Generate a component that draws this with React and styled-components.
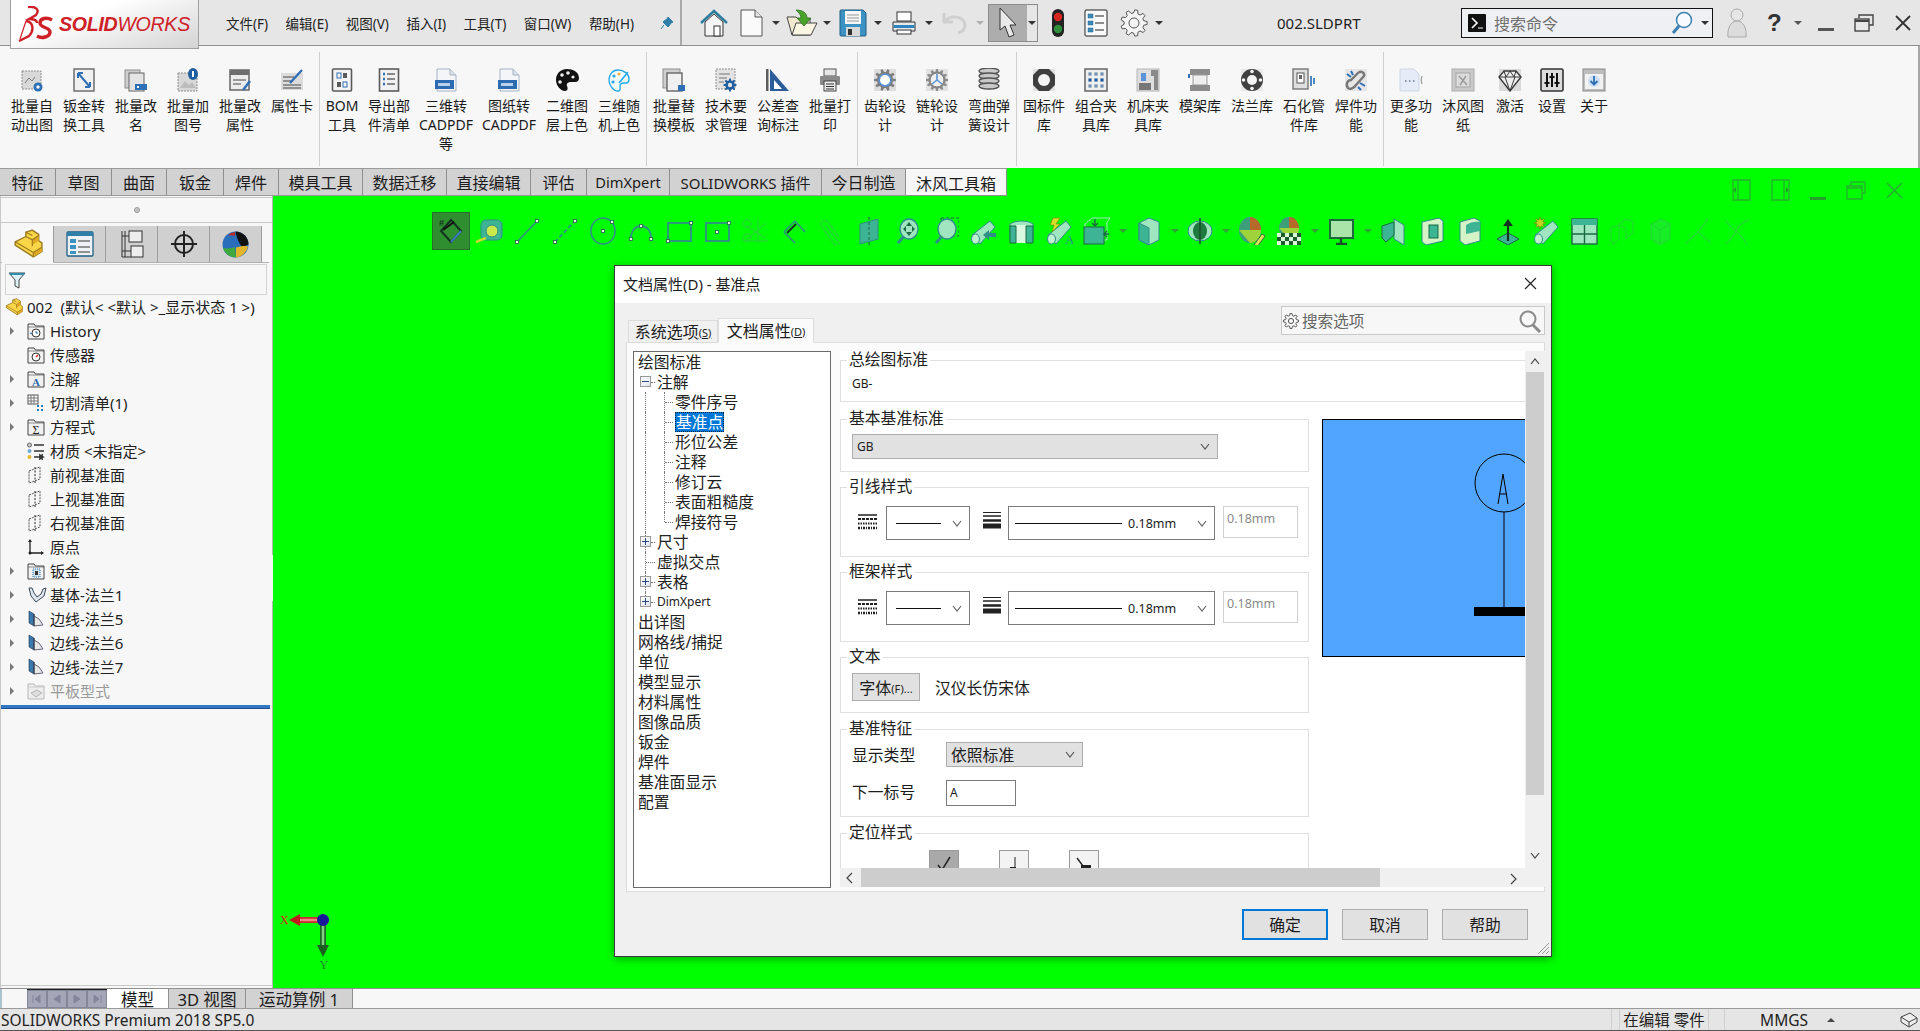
import React from "react";
import styled, { createGlobalStyle } from "styled-components";

const GlobalStyle = createGlobalStyle`
  html, body { margin: 0; padding: 0; height: 100%; overflow: hidden; background: #00ff00; }
  body { font-family: "Noto Sans", "Noto Sans CJK SC", sans-serif; color: #1c1c1c; }
  #root { height: 100%; }
  * { box-sizing: border-box; }
`;

const Svg = styled.svg`
  display: block;
  flex: none;
`;
const Ico = ({ w = 24, h, v = "0 0 24 24", children }) => (
  <Svg width={w} height={h || w} viewBox={v}>
    {children}
  </Svg>
);

const gearPath = (cx, cy, r1, r2, n) => {
  const pts = [];
  const step = (Math.PI * 2) / n;
  for (let i = 0; i < n; i++) {
    const a = i * step;
    [[-0.32, r1], [-0.16, r2], [0.16, r2], [0.32, r1]].forEach(([o, r]) => {
      const t = a + o * step;
      pts.push(`${(cx + r * Math.cos(t)).toFixed(2)} ${(cy + r * Math.sin(t)).toFixed(2)}`);
    });
  }
  return `M${pts.join("L")}Z`;
};

/* ---------- ribbon icons ---------- */
const G = "#8d8d8d";
const B = "#2f6fb5";
const ribbonIcons = {
  autoDraw: (
    <>
      <rect x="2" y="3" width="19" height="18" fill="#d9d9d9" stroke={G} strokeDasharray="2 1" />
      <path d="M5 15l4-5 3 3 3-4" fill="none" stroke="#777" />
      <circle cx="18" cy="19" r="4.5" fill={B} />
      <circle cx="18" cy="19" r="1.7" fill="#fff" />
    </>
  ),
  sheetConvert: (
    <>
      <rect x="2" y="1" width="20" height="22" fill="#f1f1f1" stroke="#666" strokeWidth="1.4" />
      <path d="M6 5l12 14M6 5v5M6 5h5M18 19v-5M18 19h-5" fill="none" stroke={B} strokeWidth="2" />
    </>
  ),
  rename: (
    <>
      <rect x="1" y="2" width="15" height="18" fill="#cfcfcf" stroke={G} />
      <rect x="5" y="5" width="15" height="18" fill="#e4e4e4" stroke="#666" />
      <rect x="11" y="16" width="12" height="6" fill={B} />
      <rect x="13" y="18" width="2" height="2" fill="#fff" />
    </>
  ),
  addNo: (
    <>
      <rect x="2" y="5" width="19" height="18" fill="#d8d8d8" stroke={G} strokeDasharray="2 1" />
      <path d="M4 20l5-7 4 4 3-3 4 6z" fill="#bcbcbc" />
      <ellipse cx="17" cy="6" rx="5" ry="6" fill="#1f5e9f" />
      <rect x="16" y="3" width="2" height="6" fill="#fff" />
    </>
  ),
  props: (
    <>
      <rect x="2" y="2" width="19" height="20" fill="#ececec" stroke="#666" strokeWidth="1.5" />
      <rect x="2" y="2" width="19" height="5" fill="#6d6d6d" />
      <path d="M5 12h13M5 16h8" stroke="#999" strokeWidth="2" />
      <path d="M15 22l7-9" stroke={B} strokeWidth="2.4" />
    </>
  ),
  card: (
    <>
      <rect x="1" y="5" width="22" height="17" fill="#dcdcdc" />
      <path d="M3 9h11M3 13h9M3 17h18M3 20h18" stroke="#7a7a7a" strokeWidth="1.7" />
      <path d="M10 15L22 2" stroke={B} strokeWidth="2.4" />
    </>
  ),
  bom: (
    <>
      <rect x="2.5" y="1" width="19" height="22" rx="1" fill="#f4f4f4" stroke="#5a5a5a" strokeWidth="1.6" />
      <rect x="7" y="5" width="4" height="5" fill="none" stroke={B} />
      <rect x="13" y="5" width="4" height="5" fill="#5a5a5a" />
      <rect x="7" y="14" width="4" height="5" fill="#5a5a5a" />
      <rect x="13" y="14" width="4" height="5" fill="none" stroke={B} />
    </>
  ),
  list: (
    <>
      <rect x="2.5" y="1" width="19" height="22" fill="#f1f1f1" stroke="#5a5a5a" strokeWidth="1.6" />
      <path d="M6 6h2M6 11h2M6 16h2" stroke={B} strokeWidth="2.4" />
      <path d="M10 6h8M10 11h8M10 16h8" stroke="#666" strokeWidth="1.6" />
    </>
  ),
  pdf: (
    <>
      <path d="M3 1h13l6 6v16H3z" fill="#f3f5f9" stroke="#a8b3c2" />
      <path d="M16 1v6h6" fill="#dbe2ec" stroke="#a8b3c2" />
      <rect x="1" y="12" width="19" height="9" fill="#2d6cb0" />
      <rect x="4" y="15" width="12" height="3" fill="#b8d0ec" />
    </>
  ),
  paletteBlack: (
    <>
      <path d="M12 1C5 1 1 6 1 12s5 11 9 11c3 0 3-3 2-5s1-4 4-4h4c3 0 4-2 4-4 0-6-6-9-12-9z" fill="#111" />
      <circle cx="7" cy="7" r="1.8" fill="#eee" />
      <circle cx="13" cy="5" r="1.8" fill="#eee" />
      <circle cx="18" cy="9" r="1.6" fill="#eee" />
      <circle cx="5" cy="14" r="1.8" fill="#eee" />
    </>
  ),
  paletteBlue: (
    <>
      <path d="M11 2C5 2 2 7 2 12s4 11 9 11c3 0 2-3 2-5s2-3 4-3h2c2 0 3-2 3-4 0-5-5-9-11-9z" fill="#f2fbff" stroke="#27a9e8" strokeWidth="1.4" />
      <circle cx="7" cy="8" r="1.6" fill="#27a9e8" />
      <circle cx="12" cy="6" r="1.6" fill="#f2b53c" />
      <circle cx="6" cy="14" r="1.6" fill="#27a9e8" />
      <path d="M12 15l9-11" stroke="#27a9e8" strokeWidth="1.6" />
    </>
  ),
  replace: (
    <>
      <rect x="1" y="1" width="17" height="19" fill="#cfcfcf" stroke={G} />
      <rect x="5" y="5" width="15" height="18" fill="#f0f0f0" stroke="#666" strokeWidth="1.4" />
      <rect x="16" y="17" width="7" height="6" fill={B} />
    </>
  ),
  techReq: (
    <>
      <rect x="2" y="1" width="19" height="20" fill="#e3e3e3" stroke={G} strokeDasharray="2 1" />
      <path d="M5 6h11M5 10h8M5 14h5" stroke="#9a9a9a" strokeWidth="1.4" />
      <path d={gearPath(16, 17, 4.6, 6.6, 8)} fill="#1f5e9f" />
      <circle cx="16" cy="17" r="2.2" fill="#e3e3e3" />
    </>
  ),
  tolerance: (
    <>
      <path d="M4 1l19 22H4z" fill="#2c5d99" />
      <path d="M8 12l8 9H8z" fill="#fff" />
      <path d="M1 1v22" stroke="#5d5d5d" strokeWidth="3" />
    </>
  ),
  printer: (
    <>
      <rect x="6" y="1" width="12" height="7" fill="#e6e6e6" stroke="#555" />
      <rect x="2" y="8" width="20" height="9" rx="1" fill="#8a8a8a" />
      <rect x="6" y="13" width="12" height="10" fill="#ececec" stroke="#444" />
      <path d="M8 16h8M8 18.5h8M8 21h8" stroke="#333" />
    </>
  ),
  gear: (
    <>
      <rect x="1" y="1" width="22" height="22" fill="#ddd" />
      <path d={gearPath(12, 12, 8, 11, 10)} fill="#7d7d7d" />
      <circle cx="12" cy="12" r="6.6" fill="#5a94d6" />
      <circle cx="12" cy="12" r="5" fill="#fff" />
    </>
  ),
  sprocket: (
    <>
      <rect x="1" y="1" width="22" height="22" fill="#e2e2e2" />
      <path d={gearPath(12, 12, 8.5, 11, 12)} fill="#8b8b8b" />
      <circle cx="12" cy="12" r="7" fill="#eee" />
      <path d="M12 12V6M12 12l5 4M12 12l-5 4" stroke="#5a94d6" strokeWidth="1.6" />
      <circle cx="12" cy="12" r="7" fill="none" stroke="#777" />
    </>
  ),
  spring: (
    <>
      {[3, 8, 13, 18].map((y) => (
        <ellipse key={y} cx="12" cy={y} rx="10" ry="3" fill="#c8c8c8" stroke="#505050" strokeWidth="1.3" />
      ))}
    </>
  ),
  nut: (
    <>
      <rect x="1" y="1" width="22" height="22" fill="#e1e1e1" />
      <path d="M7 1h10l6 6v10l-6 6H7l-6-6V7z" fill="#3f3f3f" />
      <circle cx="12" cy="12" r="6" fill="#f4f4f4" />
    </>
  ),
  clampGrid: (
    <>
      <rect x="1" y="1" width="22" height="22" fill="#efefef" stroke="#666" strokeWidth="1.5" />
      {[6, 12, 18].flatMap((y) =>
        [6, 12, 18].map((x) => <rect key={`${x}${y}`} x={x - 1.6} y={y - 1.6} width="3.2" height="3.2" fill={y === 12 ? "#1f5e9f" : "#6f8fb0"} />)
      )}
    </>
  ),
  machine: (
    <>
      <rect x="1" y="1" width="22" height="22" fill="#dedede" stroke="#b5b5b5" />
      <path d="M15 2h7v20h-4V8h-3z" fill="#8a8a8a" />
      <rect x="5" y="5" width="5" height="8" fill="#5a94d6" />
      <rect x="3" y="15" width="12" height="7" fill="#777" />
    </>
  ),
  mold: (
    <>
      <rect x="2" y="1" width="20" height="6" fill="#8c8c8c" />
      <rect x="5" y="7" width="14" height="10" fill="#eee" stroke="#999" />
      <rect x="2" y="17" width="20" height="6" fill="#8c8c8c" />
      <path d="M1 6v4" stroke={B} strokeWidth="2" />
    </>
  ),
  flange: (
    <>
      <rect x="1" y="1" width="22" height="22" fill="#eaeaea" />
      <circle cx="12" cy="12" r="11" fill="#404040" />
      <circle cx="12" cy="12" r="5" fill="#f4f4f4" />
      {[[12, 3.5], [12, 20.5], [3.5, 12], [20.5, 12]].map(([x, y]) => (
        <circle key={`${x}${y}`} cx={x} cy={y} r="1.8" fill="#f4f4f4" />
      ))}
    </>
  ),
  pipe: (
    <>
      <rect x="1" y="1" width="15" height="20" fill="#dfdfdf" stroke="#777" strokeWidth="1.4" />
      <rect x="5" y="5" width="7" height="10" fill="#fff" stroke="#555" />
      <rect x="7" y="7" width="3" height="4" fill="#666" />
      <path d="M19 8v10M22 10v6" stroke="#4b86c5" strokeWidth="2" />
    </>
  ),
  chain: (
    <>
      <rect x="1" y="1" width="22" height="22" fill="#e6e6e6" />
      <path d="M4 20c-3-4 0-8 3-8l7-7c3-3 7 0 6 3l-8 9c-2 3-6 5-8 3z" fill="none" stroke="#777" strokeWidth="2.4" />
      <path d="M3 6l4 3M7 3l2 4M16 15l5 3M14 19l3 3" stroke={B} strokeWidth="2" />
    </>
  ),
  moreDoc: (
    <>
      <path d="M1 1h14l5 5v17H1z" fill="#e6ecf7" stroke="#cdd6e4" />
      <path d="M6 13h1.5M10 13h1.5M14 13h1.5" stroke="#8794a8" strokeWidth="2" />
      <path d="M23 8c-1 3-1 5 0 8" fill="none" stroke="#888" />
    </>
  ),
  sheetPale: (
    <>
      <rect x="1" y="1" width="22" height="22" fill="#c9c9c9" stroke="#aeaeae" />
      <rect x="5" y="5" width="14" height="14" fill="#dcdcdc" stroke="#a5a5a5" />
      <path d="M8 8l8 9M15 8l-6 9" stroke="#999" strokeWidth="1.5" />
    </>
  ),
  diamond: (
    <>
      <rect x="1" y="1" width="22" height="22" fill="#dadada" />
      <path d="M6 3h12l5 6-11 14L1 9z" fill="#eee" stroke="#3a3a3a" strokeWidth="1.4" />
      <path d="M1 9h22M7 9l5 14 5-14M6 3l2 6M18 3l-2 6M12 3L8 9M12 3l4 6" fill="none" stroke="#3a3a3a" />
    </>
  ),
  sliders: (
    <>
      <rect x="1" y="1" width="22" height="22" rx="1.5" fill="#dcdcdc" stroke="#333" strokeWidth="1.6" />
      <path d="M7 5v14M12 5v14M17 5v14" stroke="#111" strokeWidth="2" />
      <path d="M4.5 15h5M9.5 9h5M14.5 15h5" stroke="#111" strokeWidth="2" />
    </>
  ),
  download: (
    <>
      <rect x="1" y="1" width="22" height="22" fill="#bdbdbd" stroke="#8a8a8a" />
      <rect x="3" y="6" width="18" height="15" fill="#f2f2f2" />
      <circle cx="12" cy="13" r="6" fill="#cfe0f3" />
      <path d="M12 8v8M8.5 13l3.5 3.5 3.5-3.5" fill="none" stroke="#2f6fb5" strokeWidth="1.8" />
    </>
  ),
};

const ribbonGroups = [
  [
    ["autoDraw", "批量自\n动出图", 52],
    ["sheetConvert", "钣金转\n换工具", 52],
    ["rename", "批量改\n名", 52],
    ["addNo", "批量加\n图号", 52],
    ["props", "批量改\n属性", 52],
    ["card", "属性卡", 52],
  ],
  [
    ["bom", "BOM\n工具", 42],
    ["list", "导出部\n件清单", 52],
    ["pdf", "三维转\nCADPDF\n等", 62],
    ["pdf", "图纸转\nCADPDF", 64],
    ["paletteBlack", "二维图\n层上色", 52],
    ["paletteBlue", "三维随\n机上色", 52],
  ],
  [
    ["replace", "批量替\n换模板", 52],
    ["techReq", "技术要\n求管理", 52],
    ["tolerance", "公差查\n询标注", 52],
    ["printer", "批量打\n印", 52],
  ],
  [
    ["gear", "齿轮设\n计", 52],
    ["sprocket", "链轮设\n计", 52],
    ["spring", "弯曲弹\n簧设计", 52],
  ],
  [
    ["nut", "国标件\n库", 52],
    ["clampGrid", "组合夹\n具库", 52],
    ["machine", "机床夹\n具库", 52],
    ["mold", "模架库", 52],
    ["flange", "法兰库", 52],
    ["pipe", "石化管\n件库", 52],
    ["chain", "焊件功\n能", 52],
  ],
  [
    ["moreDoc", "更多功\n能", 52],
    ["sheetPale", "沐风图\n纸", 52],
    ["diamond", "激活", 42],
    ["sliders", "设置", 42],
    ["download", "关于", 42],
  ],
];

/* ---------- layout ---------- */
const Page = styled.div`
  height: 100vh;
  display: flex;
  flex-direction: column;
  overflow: hidden;
`;
const TitleBar = styled.header`
  height: 46px;
  flex: none;
  display: flex;
  align-items: center;
  background: #e6e6e6;
  border-bottom: 1px solid #8f8f8f;
  position: relative;
  z-index: 3;
`;
const Logo = styled.div`
  width: 189px;
  height: 50px;
  margin: -1px 0 -4px 10px;
  align-self: flex-start;
  display: flex;
  align-items: center;
  padding-left: 7px;
  gap: 5px;
  flex: none;
  background: linear-gradient(160deg, #ffffff 35%, #d4d4d4 100%);
  border: 1px solid #a0a0a0;
  border-top: 0;
`;
const LogoText = styled.span`
  font: italic 700 19.6px/1 "Liberation Sans", sans-serif;
  color: #cf2027;
  letter-spacing: -0.3px;
  margin-top: 2px;
  b { font-weight: 400; }
`;
const Menu = styled.nav`
  display: flex;
  gap: 17.5px;
  margin-left: 27px;
  font-size: 13.5px;
  color: #222;
  width: 408px;
  white-space: nowrap;
`;
const PinWrap = styled.div`
  margin-left: 26px;
  width: 20px;
  height: 45px;
  display: flex;
  align-items: center;
`;
const QuickDivider = styled.div`
  width: 2px;
  height: 45px;
  background: #a9a9a9;
  flex: none;
`;
const QuickSlot = styled.div`
  margin-left: ${(p) => p.$ml || 0}px;
  flex: none;
  display: flex;
  align-items: center;
  justify-content: center;
`;
const Caret = styled.span`
  display: block;
  flex: none;
  width: 0;
  height: 0;
  border-left: 4px solid transparent;
  border-right: 4px solid transparent;
  border-top: 4px solid ${(p) => p.$c || "#333"};
  margin-left: ${(p) => p.$ml || 0}px;
  transform: ${(p) => (p.$up ? "rotate(180deg)" : "none")};
`;
const SelectButton = styled.div`
  margin-left: ${(p) => p.$ml}px;
  width: 50px;
  height: 38px;
  display: flex;
  flex: none;
  border: 1px solid #8c8c8c;
  background: #e6e6e6;
`;
const SelectFace = styled.div`
  width: 38px;
  background: #adadad;
  display: flex;
  align-items: center;
  justify-content: center;
`;
const SelectDrop = styled.div`
  flex: 1;
  display: flex;
  align-items: center;
  justify-content: center;
`;
const DocTitle = styled.div`
  width: 73px;
  margin-left: 114px;
  font-size: 15px;
  white-space: nowrap;
  color: #222;
`;
const SearchBox = styled.div`
  margin-left: 111px;
  width: 252px;
  height: 30px;
  flex: none;
  display: flex;
  align-items: center;
  background: #eef0f4;
  border: 1.5px solid #111;
  padding-left: 6px;
  font-size: 16px;
  color: #6f6f6f;
`;
const SearchText = styled.span`
  margin-left: 8px;
  width: 177px;
`;
const WindowBtns = styled.div`
  display: flex;
  align-items: center;
  margin-left: 14px;
`;
const Help = styled.span`
  font: 700 24px/1 "Liberation Sans", sans-serif;
  color: #333;
  margin-left: 20px;
  width: 14px;
`;

const Ribbon = styled.section`
  height: 122px;
  flex: none;
  display: flex;
  padding-left: 6px;
  background: #f7f7f7;
  border-right: 2px solid #a8a8a8;
  position: relative;
  z-index: 2;
`;
const RibbonItem = styled.div`
  width: ${(p) => p.$w}px;
  flex: none;
  padding-top: 22px;
  display: flex;
  flex-direction: column;
  align-items: center;
`;
const RibbonLabel = styled.div`
  margin-top: 4px;
  font-size: 14px;
  line-height: 19px;
  text-align: center;
  white-space: pre;
  color: #1a1a1a;
`;
const RibbonSep = styled.div`
  width: 1px;
  height: 114px;
  margin: 6px 1px 0 1px;
  flex: none;
  background: #cfcfcf;
`;

const CommandTabs = styled.div`
  height: 28px;
  flex: none;
  display: flex;
  position: relative;
`;
const CommandTab = styled.div`
  width: ${(p) => p.$w}px;
  flex: none;
  display: flex;
  align-items: center;
  justify-content: center;
  font-size: ${(p) => p.$fs || 16}px;
  white-space: nowrap;
  background: ${(p) => (p.$active ? "#f7f7f7" : "#d2d2d2")};
  border-top: 1px solid #9a9a9a;
  border-right: 1px solid #8f8f8f;
  border-bottom: ${(p) => (p.$active ? "0" : "1px solid #9a9a9a")};
  box-shadow: ${(p) => (p.$active ? "inset 0 -1px 0 #8f8f8f" : "none")};
`;
const DocControls = styled.div`
  margin-left: auto;
  margin-right: 17px;
  margin-top: 11px;
  display: flex;
  gap: 20px;
  height: 22px;
  z-index: 1;
`;

const Main = styled.div`
  flex: 1;
  min-height: 0;
  display: flex;
`;
const FeaturePanel = styled.aside`
  width: 273px;
  flex: none;
  background: #f7f7f7;
  border-right: 1px solid #b5b5b5;
  border-left: 1px solid #c8c8c8;
  display: flex;
  flex-direction: column;
  position: relative;
`;
const GripRow = styled.div`
  height: 26px;
  margin-top: 1px;
  border-top: 1px solid #c9c9c9;
  border-bottom: 1px solid #c9c9c9;
  display: flex;
  align-items: center;
  justify-content: center;
  flex: none;
`;
const GripDot = styled.span`
  display: block;
  width: 6px;
  height: 6px;
  border-radius: 50%;
  background: #c4c4c4;
  border: 1px solid #9c9c9c;
`;
const PanelTabs = styled.div`
  margin-top: 3px;
  height: 37px;
  padding-left: 1px;
  display: flex;
  flex: none;
  border-bottom: 1px solid #b0b0b0;
  width: 268px;
`;
const PanelTab = styled.div`
  width: 52px;
  flex: none;
  display: flex;
  align-items: center;
  justify-content: center;
  background: ${(p) => (p.$active ? "#f7f7f7" : "#d0d0d0")};
  border-right: 1px solid #9c9c9c;
  border-bottom: ${(p) => (p.$active ? "1px solid #f7f7f7" : "0")};
  height: ${(p) => (p.$active ? "37px" : "36px")};
`;
const FilterBox = styled.div`
  margin: 1px 0 0 4px;
  width: 262px;
  height: 31px;
  flex: none;
  border: 1px solid #d2d2d2;
  display: flex;
  align-items: center;
  padding-left: 2px;
`;
const FeatureTree = styled.div`
  flex: none;
`;
const RootRow = styled.div`
  height: 24px;
  display: flex;
  align-items: center;
  padding: 0 0 1px 4px;
  gap: 4px;
  font-size: 15px;
  white-space: pre;
`;
const FeatureRow = styled.div`
  height: 24px;
  display: flex;
  align-items: center;
  padding: 0 0 1px 9px;
  font-size: 15px;
  white-space: pre;
  color: ${(p) => (p.$muted ? "#9a9a9a" : "#222")};
`;
const ArrowCell = styled.span`
  width: 17px;
  flex: none;
  display: flex;
`;
const TreeArrow = styled.span`
  display: block;
  width: 0;
  height: 0;
  border-top: 4px solid transparent;
  border-bottom: 4px solid transparent;
  border-left: 4px solid #777;
`;
const IconCell = styled.span`
  width: 23px;
  flex: none;
  display: flex;
`;
const RollbackBar = styled.div`
  height: 4px;
  margin: 2px 2px 0 0;
  background: #2f78c4;
  border-bottom: 1px solid #254f8f;
  flex: none;
`;
const PanelFooter = styled.div`
  margin-top: auto;
  height: 3px;
  border-top: 1px solid #c9c9c9;
  flex: none;
`;
const FlyoutGrip = styled.div`
  position: absolute;
  left: 271px;
  top: 358px;
  width: 12px;
  height: 48px;
  background: #f7f7f7;
  border: 1px solid #b5b5b5;
  border-left: 0;
  display: flex;
  align-items: center;
  justify-content: center;
`;

const Canvas = styled.main`
  flex: 1;
  position: relative;
  background: #00ff00;
  padding: 16px 0 0 159px;
  min-width: 0;
`;
const HeadsUp = styled.div`
  display: flex;
  align-items: center;
  height: 38px;
`;
const HudSlot = styled.div`
  width: 38px;
  height: 38px;
  flex: none;
  display: flex;
  align-items: center;
  justify-content: center;
  background: ${(p) => (p.$on ? "#2f8f2f" : "transparent")};
  border: ${(p) => (p.$on ? "1px solid #2a6a2a" : "0")};
`;
const HudCaret = styled.div`
  width: ${(p) => p.$w}px;
  flex: none;
  display: flex;
  justify-content: center;
`;
const Triad = styled.div`
  position: absolute;
  left: 4px;
  bottom: 17px;
`;

/* ---------- dialog ---------- */
const Dialog = styled.div`
  position: absolute;
  left: 341px;
  top: 69px;
  width: 938px;
  height: 692px;
  background: #f0f0f0;
  border: 1px solid #3a3a3a;
  box-shadow: 0 2px 8px rgba(0, 60, 0, 0.45);
  display: flex;
  flex-direction: column;
`;
const DialogHead = styled.div`
  height: 37px;
  flex: none;
  background: #fff;
  display: flex;
  align-items: center;
  justify-content: space-between;
  padding: 0 14px 2px 8px;
  font-size: 15px;
`;
const DialogTop = styled.div`
  height: 39px;
  flex: none;
  display: flex;
  padding-left: 13px;
  position: relative;
  z-index: 1;
`;
const OptionTab = styled.div`
  align-self: flex-end;
  height: ${(p) => (p.$active ? 25 : 23)}px;
  width: ${(p) => (p.$active ? 96 : 90)}px;
  background: ${(p) => (p.$active ? "#fbfbfb" : "#f0f0f0")};
  border: 1px solid #dcdcdc;
  border-bottom: ${(p) => (p.$active ? "1px solid #fbfbfb" : "1px solid #dcdcdc")};
  margin-bottom: -1px;
  padding-bottom: 2px;
  display: flex;
  align-items: center;
  justify-content: center;
  font-size: 16px;
  white-space: nowrap;
  small {
    font-size: 11px;
    text-decoration: underline;
    margin-top: 3px;
  }
`;
const OptionSearch = styled.div`
  margin: 3px 6px 0 auto;
  width: 264px;
  height: 29px;
  background: #f7f7f7;
  border: 1px solid #c9c9c9;
  display: flex;
  align-items: center;
  padding: 0 2px 0 1px;
  gap: 3px;
  font-size: 15.6px;
  color: #666;
  span { flex: 1; }
`;
const PropsPanel = styled.div`
  margin: 0 6px 0 11px;
  height: 550px;
  flex: none;
  background: #fbfbfb;
  border: 1px solid #dcdcdc;
  display: flex;
  padding: 8px 0 0 6px;
  align-items: flex-start;
`;
const OptionTree = styled.div`
  width: 198px;
  height: 537px;
  flex: none;
  background: #fff;
  border: 1px solid #6b6b6b;
  overflow: hidden;
`;
const OptionRow = styled.div`
  height: 20px;
  position: relative;
  display: flex;
  align-items: center;
  padding: 0 0 1px ${(p) => [4, 23, 41][p.$level]}px;
  font-size: ${(p) => (p.$small ? 12 : 15.8)}px;
  white-space: nowrap;
  color: #222;
`;
const Sel = styled.span`
  background: #0078d7;
  color: #fff;
  outline: 1px dotted #102a4a;
  outline-offset: -1px;
  padding: 0 1px;
  line-height: 20px;
`;
const Guide = styled.i`
  position: absolute;
  left: ${(p) => p.$x}px;
  top: ${(p) => p.$top || 0}px;
  bottom: ${(p) => p.$bottom || 0}px;
  border-left: 1px dotted #777;
`;
const Stub = styled.i`
  position: absolute;
  left: ${(p) => p.$x}px;
  top: 10px;
  width: ${(p) => p.$w}px;
  border-top: 1px dotted #777;
`;
const Expander = styled.span`
  position: absolute;
  left: 6px;
  top: 4px;
  width: 11px;
  height: 11px;
  border: 1px solid #9a9a9a;
  background: linear-gradient(135deg, #fff, #dfe3ea);
  &::before {
    content: "";
    position: absolute;
    left: 1px;
    right: 1px;
    top: 4px;
    height: 1px;
    background: #2c4a7c;
  }
  &::after {
    content: "";
    display: ${(p) => (p.$open ? "none" : "block")};
    position: absolute;
    top: 1px;
    bottom: 1px;
    left: 4px;
    width: 1px;
    background: #2c4a7c;
  }
`;
const ScrollFrame = styled.div`
  margin-left: 9px;
  width: 705px;
  height: 536px;
  flex: none;
  display: grid;
  grid-template-columns: 685px 20px;
  grid-template-rows: 517px 19px;
`;
const ScrollView = styled.div`
  overflow: hidden;
  background: #fff;
  display: grid;
  grid-template-columns: 469px 1fr;
  column-gap: 13px;
  align-content: start;
`;
const Group = styled.fieldset`
  margin: ${(p) => p.$mt || 0}px ${(p) => (p.$wide ? "-30px" : "0")} 0 0;
  grid-column: ${(p) => (p.$wide ? "1 / 3" : "1")};
  padding: ${(p) => p.$pt || 0}px 0 0 11px;
  height: ${(p) => p.$h}px;
  border: 1px solid #dfdfdf;
  min-width: 0;
  position: relative;
`;
const Legend = styled.legend`
  margin-left: -5px;
  padding: 0 2px 2px;
  font-size: 15.8px;
  line-height: 16px;
  color: #222;
`;
const SmallText = styled.div`
  font-size: 12px;
  line-height: 16px;
`;
const Combo = styled.div`
  width: ${(p) => p.$w}px;
  height: ${(p) => p.$h}px;
  flex: none;
  display: flex;
  align-items: center;
  justify-content: space-between;
  padding: 0 7px 0 ${(p) => p.$pl || 4}px;
  background: ${(p) => (p.$flat ? "#fff" : "#e1e1e1")};
  border: 1px solid ${(p) => (p.$flat ? "#7a7a7a" : "#adadad")};
  font-size: ${(p) => p.$fs || 12}px;
`;
const LineSample = styled.span`
  display: block;
  width: ${(p) => p.$w}px;
  height: 1px;
  background: #111;
  flex: none;
`;
const ComboLabel = styled.span`
  font-size: 12.5px;
  margin-left: 6px;
  flex: 1;
`;
const StyleRow = styled.div`
  display: flex;
  align-items: flex-start;
`;
const IconHolder = styled.div`
  margin: ${(p) => p.$m};
  flex: none;
`;
const GrayInput = styled.div`
  width: 75px;
  height: 32px;
  margin-left: 8px;
  border: 1px solid #d2d2d2;
  font-size: 12.5px;
  line-height: 24px;
  padding-left: 3px;
  color: #8a8a8a;
`;
const Preview = styled.div`
  grid-column: 2;
  grid-row: 2 / span 5;
  margin-top: 17px;
  height: 238px;
  background: #52a5ff;
  border: 1px solid #000;
  border-right: 0;
  overflow: hidden;
`;
const FontRow = styled.div`
  display: flex;
  align-items: center;
  font-size: 15.8px;
`;
const FontButton = styled.div`
  width: 68px;
  height: 28px;
  flex: none;
  margin-right: 15px;
  background: #e1e1e1;
  border: 1px solid #adadad;
  display: flex;
  align-items: center;
  justify-content: center;
  font-size: 16px;
  small { font-size: 11px; margin-top: 2px; white-space: nowrap; }
`;
const FieldRow = styled.div`
  display: flex;
  align-items: center;
  font-size: 15.8px;
  margin-top: ${(p) => p.$mt || 0}px;
`;
const FieldLabel = styled.span`
  width: 94px;
  margin-top: ${(p) => p.$mt || 0}px;
`;
const TextInput = styled.div`
  width: 70px;
  height: 26px;
  border: 1px solid #7a7a7a;
  font-size: 12px;
  line-height: 24px;
  padding-left: 3px;
  background: #fff;
`;
const ToggleRow = styled.div`
  display: flex;
  gap: 40px;
  padding-left: 77px;
`;
const Toggle = styled.div`
  width: 30px;
  height: 30px;
  border: 1px solid #9a9a9a;
  background: ${(p) => (p.$on ? "#a9a9a9" : "#f3f3f3")};
  display: flex;
  justify-content: center;
  padding-top: 5px;
`;
const VScroll = styled.div`
  grid-row: 1 / 3;
  grid-column: 2;
  background: #f0f0f0;
  display: flex;
  flex-direction: column;
  align-items: center;
  position: relative;
  padding-top: 7px;
`;
const VThumb = styled.div`
  position: absolute;
  top: 21px;
  left: 1px;
  width: 18px;
  height: 423px;
  background: #cdcdcd;
`;
const VDown = styled.div`
  position: absolute;
  top: 501px;
  left: 5px;
`;
const HScroll = styled.div`
  background: #f0f0f0;
  display: flex;
  align-items: center;
  position: relative;
  padding-left: 6px;
`;
const HThumb = styled.div`
  position: absolute;
  left: 21px;
  top: 0;
  width: 519px;
  height: 19px;
  background: #cdcdcd;
`;
const HRight = styled.div`
  position: absolute;
  left: 670px;
  top: 5px;
`;
const DialogFooter = styled.div`
  flex: 1;
  display: flex;
  justify-content: flex-end;
  gap: 14px;
  padding: 17px 23px 0 0;
`;
const DlgButton = styled.div`
  width: 86px;
  height: 31px;
  display: flex;
  align-items: center;
  justify-content: center;
  background: #e1e1e1;
  border: ${(p) => (p.$primary ? "2px solid #0078d7" : "1px solid #adadad")};
  font-size: 15.8px;
`;
const ResizeGrip = styled.div`
  position: absolute;
  right: 1px;
  bottom: 1px;
`;

/* ---------- bottom ---------- */
const BottomTabs = styled.div`
  height: 20px;
  flex: none;
  display: flex;
  align-items: stretch;
  background: #f7f7f7;
  border-top: 1px solid #8f8f8f;
  position: relative;
  z-index: 2;
`;
const Stripe = styled.div`
  width: 2px;
  background: #a9c6cf;
  margin-right: 25px;
`;
const NavButtons = styled.div`
  width: 80px;
  display: flex;
  background: #9a9cb0;
  border-top: 1px solid #222;
`;
const NavButton = styled.div`
  width: 20px;
  border: 1px solid #84869a;
  background: #a4a6b8;
  display: flex;
  align-items: center;
  justify-content: center;
`;
const SheetTab = styled.div`
  width: ${(p) => p.$w}px;
  flex: none;
  display: flex;
  align-items: center;
  justify-content: center;
  font-size: 16.6px;
  white-space: pre;
  background: ${(p) => (p.$active ? "#fff" : "#d2d2d2")};
  border-right: ${(p) => (p.$active ? "0" : "1px solid #8f8f8f")};
  border-left: ${(p) => (p.$active ? "0" : "1px solid #8f8f8f")};
  margin-left: ${(p) => (p.$join ? "-1px" : "0")};
`;
const StatusBar = styled.footer`
  height: 23px;
  flex: none;
  display: flex;
  align-items: center;
  padding-left: 1px;
  background: #e5e5e5;
  border-top: 1px solid #9a9a9a;
  border-bottom: 1px solid #555;
  font-size: 15.5px;
  color: #222;
`;
const StatusCell = styled.div`
  margin-left: ${(p) => p.$ml || 0}px;
  width: ${(p) => p.$w}px;
  height: 100%;
  flex: none;
  display: flex;
  align-items: center;
  justify-content: ${(p) => p.$j || "center"};
  border-left: ${(p) => (p.$line ? "1px solid #cfcfcf" : "0")};
  white-space: pre;
`;

/* ---------- small icons ---------- */
const PartIcon = ({ s = 24 }) => (
  <Ico w={s} v="0 0 28 28">
    <path d="M2 12l10-5V3l6-2 6 4v6l3 2v8l-8 5L2 15z" fill="#f9d548" stroke="#9a7a20" strokeWidth="1.3" strokeLinejoin="round" />
    <path d="M18 10l6-4v5l-6 4zM19 22l8-5v4l-8 5z" fill="#e2aa22" />
    <path d="M12 7l6 3 6-4M18 10v6M12 3l6 3M2 12l17 10v4M19 22l8-5" fill="none" stroke="#9a7a20" strokeWidth="1.1" />
  </Ico>
);
const Folder = ({ children, muted }) => {
  const c = muted ? "#b8b8b8" : "#444";
  return (
    <Ico w={18} h={18} v="0 0 18 18">
      <path d="M1 2h6l1.500 2H17v13H1z" fill={muted ? "#eee" : "#f1f1f1"} stroke={c} />
      <path d="M1 5h16" stroke={c} strokeWidth=".6" />
      {children}
    </Ico>
  );
};
const Plane = () => (
  <Ico w={16} h={18} v="0 0 16 18">
    <path d="M2 5l11-4v12L2 17z" fill="none" stroke="#555" strokeDasharray="2 1" />
    <path d="M8 1v16" stroke="#222" strokeDasharray="2 1.500" />
  </Ico>
);
const SheetBody = ({ c = "#3a79b0" }) => (
  <Ico w={18} h={20} v="0 0 18 20">
    <path d="M2 2l5 3v12l-5-3z" fill={c} stroke="#234" strokeWidth=".6" />
    <path d="M7 17l9-1-4-6-5-3z" fill="#e8e8e8" stroke="#667" />
    <path d="M7 5v12" stroke="#234" />
  </Ico>
);

const featureRows = [
  [1, <Folder><circle cx="9" cy="11" r="4" fill="#fff" stroke="#333" /><path d="M9 9v2h2M3 11l2 1" stroke="#1f6fa8" fill="none" /></Folder>, "History"],
  [0, <Folder><circle cx="9" cy="11" r="4" fill="#fff" stroke="#333" /><path d="M9 11l2-2" stroke="#d22" strokeWidth="1.500" /></Folder>, "传感器"],
  [1, <Folder><text x="9" y="15.500" fontFamily="Liberation Serif" fontWeight="700" fontSize="11" textAnchor="middle" fill="#2a6aa8">A</text></Folder>, "注解"],
  [1, <Ico w={18} h={18} v="0 0 18 18"><rect x="1" y="1" width="10" height="9" fill="#fff" stroke="#555" /><path d="M1 4h10M1 7h10M4 1v9M7 1v9" stroke="#777" /><path d="M10 11h2v2h-2zM14 11h2v2h-2zM10 15h2v2h-2zM14 15h2v2h-2z" fill="#2a7fb0" /></Ico>, "切割清单(1)"],
  [1, <Folder><text x="9" y="15.500" fontFamily="Liberation Serif" fontSize="12" textAnchor="middle" fill="#222">Σ</text></Folder>, "方程式"],
  [0, <Ico w={18} h={18} v="0 0 18 18"><circle cx="2.500" cy="3" r="2" fill="#ccc" stroke="#666" /><circle cx="2.500" cy="9" r="2" fill="#6fa8d8" /><circle cx="2.500" cy="15" r="2" fill="#e8b52f" /><path d="M7 3h10M7 9h10M7 15h4" stroke="#333" strokeWidth="1.700" /><path d={gearPath(14, 15, 2.2, 3.4, 6)} fill="#333" /></Ico>, "材质 <未指定>"],
  [0, <Plane />, "前视基准面"],
  [0, <Plane />, "上视基准面"],
  [0, <Plane />, "右视基准面"],
  [0, <Ico w={18} h={18} v="0 0 18 18"><path d="M3 2v13h13" fill="none" stroke="#222" strokeWidth="1.300" /><path d="M1 4l2-3 2 3zM14 13l3 2-3 2z" fill="#222" /><circle cx="3" cy="15" r="1.500" fill="#222" /></Ico>, "原点"],
  [1, <Folder><rect x="6" y="7" width="7" height="8" fill="#cfe3ef" stroke="#1f6fa8" strokeDasharray="1 1" /><rect x="8" y="9" width="3" height="4" fill="#333" /></Folder>, "钣金"],
  [1, <Ico w={20} h={18} v="0 0 20 18"><path d="M2 2l2 8 5 6 8-6 2-8-3 1-2 5-4 3-3-4-2-5z" fill="#dfe6ee" stroke="#3a4a5a" /></Ico>, "基体-法兰1"],
  [1, <SheetBody />, "边线-法兰5"],
  [1, <SheetBody />, "边线-法兰6"],
  [1, <SheetBody />, "边线-法兰7"],
];

const hudColors = { s: "#2f8f86", l: "#9fe5bf", d: "#1a6a44", f: "#3db594", off: "#1fdc2e" };
const Handle = ({ x, y }) => <rect x={x - 1.5} y={y - 1.5} width="3" height="3" fill="#e8ffe0" stroke="#1d5f45" strokeWidth=".8" />;
const { s: hs, l: hl, d: hd, f: hf, off: ho } = hudColors;
const Zoomer = ({ children }) => (
  <>
    <path d="M5 26l6-7" stroke={hs} strokeWidth="3" />
    <ellipse cx="16" cy="12" rx="9" ry="10" fill={hl} stroke={hs} strokeWidth="1.4" />
    {children}
  </>
);
const Binocular = ({ children }) => (
  <>
    <path d="M3 18L21 4l5 6-15 17z" fill={hl} stroke={hs} />
    <ellipse cx="6.5" cy="22" rx="4" ry="5" fill="#bff0d0" stroke={hs} />
    {children}
  </>
);
const hudIcons = [
  { on: 1, el: <><path d="M14 3l10 11-10 11L4 14z" fill="none" stroke="#14331f" strokeWidth="2" /><path d="M14 25l10-11" stroke="#3a7ac0" strokeWidth="2" /><path d="M6 13L17 5" stroke="#111" strokeWidth="2" /><text x="2" y="9" fontSize="9" fontWeight="700" fill="#14331f" fontFamily="Liberation Sans">#</text></> },
  { el: <><rect x="6" y="3" width="21" height="20" rx="5" fill={hf} stroke={hs} /><circle cx="17" cy="14" r="6" fill="#c8e84e" stroke={hs} /><path d="M1 25l10-4" stroke="#c8d838" strokeWidth="2.5" /></> },
  { el: <><path d="M4 25L24 4" stroke={hs} strokeWidth="1.6" /><Handle x={4} y={25} /><Handle x={24} y={4} /></> },
  { el: <><path d="M4 25L24 4" stroke={hs} strokeWidth="1.8" strokeDasharray="4 2.5" /><Handle x={4} y={25} /><Handle x={24} y={4} /></> },
  { el: <><ellipse cx="14" cy="14" rx="12" ry="13" fill="none" stroke={hs} strokeWidth="1.6" /><Handle x={14} y={14} /><Handle x={23} y={5} /></> },
  { el: <><path d="M4 21C4 5 24 5 24 21" fill="none" stroke={hs} strokeWidth="1.8" /><Handle x={4} y={22} /><Handle x={14} y={9} /><Handle x={24} y={22} /></> },
  { el: <><rect x="3" y="6" width="23" height="18" fill="none" stroke={hs} strokeWidth="1.8" /><Handle x={26} y={6} /><Handle x={3} y={24} /></> },
  { el: <><rect x="3" y="6" width="23" height="18" fill="none" stroke={hs} strokeWidth="1.8" /><Handle x={26} y={6} /><Handle x={14} y={15} /></> },
  { el: <path d="M4 24L25 6M4 8l20 13M17 3v24M2 24h25M6 3a4 4 0 1 0 .1 0zM6 17a4 4 0 1 0 .1 0z" fill="none" stroke={ho} strokeWidth="1.4" /> },
  { el: <><path d="M5 15L16 4M5 15l11 11M16 4l10 11" fill="none" stroke={hs} strokeWidth="1.6" /><path d="M8 16l9-9" stroke="#14331f" strokeWidth="2" /></> },
  { el: <path d="M8 8l13 16c3 3-2 6-4 3L5 10c-3-5 3-9 6-5l11 15" fill="none" stroke={ho} strokeWidth="1.6" /> },
  { el: <><path d="M5 7l18-5v20L5 27z" fill={hf} stroke={hs} /><path d="M14 0v28" stroke="#1a6a44" strokeDasharray="3 2" /></> },
  { el: <Zoomer><path d="M16 5l3 4h-6zM16 19l3-4h-6zM10 12l3-3v6zM22 12l-3-3v6z" fill={hd} /></Zoomer> },
  { el: <><rect x="10" y="1" width="18" height="18" fill="none" stroke={hd} strokeDasharray="3 2" /><Zoomer /></> },
  { el: <><Binocular /><path d="M14 18l6-5v3h7v4h-7v3z" fill={hs} /></> },
  { el: <><path d="M3 7c6-4 18-4 23 0v16c-5 3-18 3-23 0z" fill={hl} stroke={hs} /><path d="M9 8h10v18H9z" fill="#d8f8e0" /><path d="M3 9h6v17H3zM19 9h7v17h-7z" fill={hf} stroke={hd} /></> },
  { el: <><Binocular /><path d="M8 1h7l-4 6h4L7 15l2-7H5z" fill="#d8dc28" stroke="#6a8a10" strokeWidth=".6" /><text x="20" y="27" fontFamily="Liberation Serif" fontSize="13" fill={hs}>A</text></> },
  { el: <><path d="M9 1h18l-3 4v18H2V7z" fill="none" stroke={hl} /><rect x="1" y="10" width="20" height="17" fill={hf} stroke={hd} /><path d="M12 2v6M9 6l3 3 3-3M26 17h-4M24 14l-3 3 3 3" fill="none" stroke={hd} strokeWidth="1.4" /></>, caret: 14 },
  { el: <><path d="M4 6l10-5 10 4v18l-10 5-10-5z" fill={hl} stroke={hs} /><path d="M4 6l10 5v17L4 23z" fill={hf} stroke={hs} /></>, caret: 13 },
  { el: <><ellipse cx="14" cy="14" rx="12" ry="10" fill={hl} stroke={hs} /><ellipse cx="14" cy="14" rx="7" ry="9" fill="#1e7a3e" /><path d="M14 1v26" stroke="#174f2d" strokeWidth="1.5" /></>, caret: 13 },
  { el: <><ellipse cx="13" cy="13" rx="11" ry="13" fill="#3c9f7a" /><path d="M13 0a11 13 0 0 1 11 13H13z" fill="#b56a2a" /><path d="M2 13h22c0 7-5 13-11 13z" fill="#9ed43a" /><path d="M17 28l8-11 3 2-8 11z" fill="#d8e45c" stroke="#234" strokeWidth=".7" /></> },
  { el: <><ellipse cx="14" cy="11" rx="10" ry="11" fill="#3c9f7a" /><path d="M14 0a10 11 0 0 1 10 11H14z" fill="#b56a2a" /><path d="M4 11h20c0 6-4 11-10 11z" fill="#9ed43a" /><rect x="2" y="16" width="24" height="12" fill="#1c5f2c" /><path d="M2 16h4v4H2zM10 16h4v4h-4zM18 16h4v4h-4zM6 20h4v4H6zM14 20h4v4h-4zM22 20h4v4h-4zM2 24h4v4H2zM10 24h4v4h-4zM18 24h4v4h-4z" fill="#d8f8d8" /></>, caret: 14 },
  { el: <><rect x="3" y="3" width="23" height="18" fill="#a9e5a9" stroke="#1c6a3c" strokeWidth="2" /><path d="M14 21v5M9 27h11" stroke="#174f2d" strokeWidth="2.4" /></>, caret: 15 },
  { el: <><path d="M14 2l10 6v20l-10-6z" fill={hl} stroke={hs} /><path d="M2 9l12-4v13L6 25 2 21z" fill={hf} stroke={hd} /></> },
  { el: <><path d="M4 5l17-4 4 3v20l-17 4-4-3z" fill="#d4f4c8" stroke={hs} /><rect x="11" y="8" width="9" height="13" fill={hf} stroke={hd} /></> },
  { el: <><path d="M4 5l14-4 6 3v20l-15 4-5-4z" fill="#d4f4c8" stroke={hs} /><path d="M10 8c4-3 10-4 14-3v9l-14 3z" fill={hf} /></> },
  { el: <><path d="M3 22l11-6 11 6-11 6z" fill={hf} stroke={hd} /><path d="M14 24V4" stroke="#14331f" strokeWidth="2.2" /><path d="M9 9l5-7 5 7z" fill="#14331f" /></> },
  { el: <><Binocular /><path d={gearPath(8, 6, 3.4, 5.4, 8)} fill="#c4d424" stroke="#5a7a10" strokeWidth=".6" /></> },
  { el: <><rect x="2" y="2" width="25" height="25" fill={hl} stroke={hd} strokeWidth="1.4" /><rect x="2" y="2" width="25" height="6" fill={hf} /><path d="M14.5 8v19M2 17h25" stroke={hd} strokeWidth="1.4" /></> },
  { el: <path d="M3 11l8-3v14l-6 5-2-3zM11 8l7-6 7 3v11l-7 5M11 8l7 4v10" fill="none" stroke={ho} strokeWidth="1.3" /> },
  { el: <path d="M5 7l10-5 9 5v15l-10 6-9-6zM5 7l9 6v15M14 13l10-6" fill="#18ee26" stroke={ho} strokeWidth="1.3" /> },
  { el: <path d="M1 27L14 15l13 11M14 15L24 2M14 15v0" fill="none" stroke={ho} strokeWidth="1.5" /> },
  { el: <path d="M3 3c4 5 7 8 11 11 5 4 7 8 11 13M27 3c-6 2-11 6-13 11-3 6-7 10-10 13" fill="none" stroke={ho} strokeWidth="1.5" /> },
];

const Chevron = ({ c = "#444", up, left, right }) => {
  let d = "M1 1l4 5 4-5";
  if (up) d = "M1 6l4-5 4 5";
  if (left) d = "M6 1L1 6l5 5";
  if (right) d = "M1 1l5 5-5 5";
  const side = left || right;
  return (
    <Ico w={side ? 7 : 10} h={side ? 12 : 7} v={side ? "0 0 7 12" : "0 0 10 7"}>
      <path d={d} fill="none" stroke={c} strokeWidth="1.2" />
    </Ico>
  );
};
const LineType = () => (
  <Ico w={19} h={16} v="0 0 19 16">
    <path d="M0 1h19" stroke="#222" strokeWidth="1.5" />
    <path d="M0 5h19" stroke="#222" strokeWidth="2" strokeDasharray="3 1" />
    <path d="M0 9.5h19" stroke="#222" strokeWidth="2" strokeDasharray="1.5 1" />
    <path d="M0 14h19" stroke="#222" strokeWidth="2.5" strokeDasharray="2 1 1 1" />
  </Ico>
);
const LineWeight = () => (
  <Ico w={18} h={17} v="0 0 18 17">
    <path d="M0 .5h18" stroke="#222" />
    <path d="M0 4h18" stroke="#222" strokeWidth="1.5" />
    <path d="M0 8.5h18" stroke="#222" strokeWidth="2.5" />
    <path d="M0 14h18" stroke="#222" strokeWidth="5" />
  </Ico>
);
const StyleFields = () => (
  <StyleRow>
    <IconHolder $m="8px 9px 0 6px"><LineType /></IconHolder>
    <Combo $flat $w={84} $h={34} $pl={9}>
      <LineSample $w={45} />
      <Chevron c="#666" />
    </Combo>
    <IconHolder $m="6px 7px 0 13px"><LineWeight /></IconHolder>
    <Combo $flat $w={207} $h={34} $pl={6}>
      <LineSample $w={107} />
      <ComboLabel>0.18mm</ComboLabel>
      <Chevron c="#666" />
    </Combo>
    <GrayInput>0.18mm</GrayInput>
  </StyleRow>
);

const optionRows = [
  { t: "绘图标准", l: 0 },
  { t: "注解", l: 1, exp: "open", g1b: 1 },
  { t: "零件序号", l: 2, v1: 1, v2: 1 },
  { t: "基准点", l: 2, v1: 1, v2: 1, sel: 1 },
  { t: "形位公差", l: 2, v1: 1, v2: 1 },
  { t: "注释", l: 2, v1: 1, v2: 1 },
  { t: "修订云", l: 2, v1: 1, v2: 1 },
  { t: "表面粗糙度", l: 2, v1: 1, v2: 1 },
  { t: "焊接符号", l: 2, v1: 1, v2: 1, v2end: 1 },
  { t: "尺寸", l: 1, exp: "closed", v1: 1 },
  { t: "虚拟交点", l: 1, v1: 1, stub: 1 },
  { t: "表格", l: 1, exp: "closed", v1: 1 },
  { t: "DimXpert", l: 1, exp: "closed", v1end: 1, small: 1 },
  { t: "出详图", l: 0 },
  { t: "网格线/捕捉", l: 0 },
  { t: "单位", l: 0 },
  { t: "模型显示", l: 0 },
  { t: "材料属性", l: 0 },
  { t: "图像品质", l: 0 },
  { t: "钣金", l: 0 },
  { t: "焊件", l: 0 },
  { t: "基准面显示", l: 0 },
  { t: "配置", l: 0 },
];

const commandTabs = [
  ["特征", 56], ["草图", 56], ["曲面", 55], ["钣金", 57], ["焊件", 55], ["模具工具", 84], ["数据迁移", 84],
  ["直接编辑", 84], ["评估", 56], ["DimXpert", 83, 14.7], ["SOLIDWORKS 插件", 152, 15], ["今日制造", 84], ["沐风工具箱", 101],
];

export default function App() {
  return (
    <Page>
      <GlobalStyle />
      <TitleBar>
        <Logo>
          <Ico w={36} h={36} v="0 0 36 36">
            <path d="M10 1c8-1 12 3 8 8l-7 4c5 0 8 1 8 4" fill="none" stroke="#cf2027" strokeWidth="2.4" />
            <path d="M8 15c8 1 8 10 3 15L1 35" fill="none" stroke="#cf2027" strokeWidth="2.4" />
            <path d="M8 15L2 33" fill="none" stroke="#cf2027" strokeWidth="1.2" />
            <path d="M34 14c-5-3-12-2-12 3s10 4 10 9-8 7-13 4" fill="none" stroke="#cf2027" strokeWidth="3.4" />
          </Ico>
          <LogoText>SOLID<b>WORKS</b></LogoText>
        </Logo>
        <Menu>
          {["文件(F)", "编辑(E)", "视图(V)", "插入(I)", "工具(T)", "窗口(W)", "帮助(H)"].map((m) => (
            <span key={m}>{m}</span>
          ))}
        </Menu>
        <PinWrap>
          <Ico w={14} h={14} v="0 0 14 14">
            <path d="M8 1l5 5-2 1-2 3-1 1-5-5 1-1 3-2zM4 9l-3 4" fill="#2f7fa8" stroke="#2f7fa8" />
          </Ico>
        </PinWrap>
        <QuickDivider />
        <QuickSlot $ml={18}>
          <Ico w={28} h={28} v="0 0 28 28">
            <path d="M1 14L14 2l13 12" fill="none" stroke="#2c7c9c" strokeWidth="2.4" />
            <path d="M5 13v14h18V13L14 5z" fill="#f5f5f5" stroke="#333" />
            <rect x="14" y="17" width="6" height="10" fill="#fff" stroke="#333" />
          </Ico>
        </QuickSlot>
        <QuickSlot $ml={12}>
          <Ico w={23} h={28} v="0 0 23 28">
            <path d="M1 1h14l7 7v19H1z" fill="#fafafa" stroke="#555" />
            <path d="M15 1v7h7" fill="#e6e6e6" stroke="#555" />
          </Ico>
        </QuickSlot>
        <Caret $ml={9} />
        <QuickSlot $ml={6}>
          <Ico w={32} h={28} v="0 0 32 28">
            <path d="M1 8h9l2 2h12v16H6z" fill="#f0e9d0" stroke="#444" />
            <path d="M6 26l4-12h21l-6 12z" fill="#fbf6e2" stroke="#444" />
            <path d="M10 1c7 0 11 3 11 8h4l-7 8-7-8h4c0-3-2-5-5-8z" fill="#4aa32a" stroke="#24631a" strokeWidth=".7" />
          </Ico>
        </QuickSlot>
        <Caret $ml={5} />
        <QuickSlot $ml={8}>
          <Ico w={28} h={28} v="0 0 28 28">
            <path d="M1 2a1 1 0 0 1 1-1h22l3 3v22a1 1 0 0 1-1 1H2a1 1 0 0 1-1-1z" fill="#3d92c4" stroke="#1d5d85" />
            <rect x="6" y="2" width="16" height="13" fill="#f6f6f6" />
            <path d="M8 6h12M8 9h12M8 12h12" stroke="#999" />
            <rect x="7" y="18" width="14" height="9" fill="#d9d9d9" />
            <rect x="9" y="20" width="4" height="6" fill="#333" />
          </Ico>
        </QuickSlot>
        <Caret $ml={7} />
        <QuickSlot $ml={10}>
          <Ico w={24} h={24}>
            <rect x="5" y="1" width="14" height="9" fill="#fff" stroke="#333" />
            <path d="M1 11h22v9H1z" fill="#e9e9e9" stroke="#333" />
            <rect x="1.5" y="14" width="21" height="3" fill="#2d84bf" />
            <rect x="5" y="19" width="14" height="4" fill="#fff" stroke="#333" />
          </Ico>
        </QuickSlot>
        <Caret $ml={9} />
        <QuickSlot $ml={9}>
          <Ico w={26} h={24} v="0 0 26 24">
            <path d="M2 2v9h9M3 11c4-7 19-7 20 3 0 4-3 7-7 8" fill="none" stroke="#cfcfcf" strokeWidth="3" />
          </Ico>
        </QuickSlot>
        <Caret $c="#b0b0b0" $ml={8} />
        <SelectButton $ml={4}>
          <SelectFace>
            <Ico w={20} h={32} v="0 0 20 32">
              <path d="M2 1v22l5-4 4 11 5-2-4-10h6z" fill="#e9e9e9" stroke="#333" />
            </Ico>
          </SelectFace>
          <SelectDrop><Caret /></SelectDrop>
        </SelectButton>
        <QuickSlot $ml={13}>
          <Ico w={14} h={30} v="0 0 14 30">
            <rect x="1" y="1" width="12" height="28" rx="6" fill="#222" />
            <circle cx="7" cy="9" r="4.2" fill="#d6281f" />
            <circle cx="7" cy="21" r="4.2" fill="#2f8f3a" />
          </Ico>
        </QuickSlot>
        <QuickSlot $ml={19}>
          <Ico w={24} h={28} v="0 0 24 28">
            <rect x="1" y="1" width="22" height="26" rx="1" fill="#fafafa" stroke="#222" />
            <path d="M4 5h5v4H4zM4 12h5v4H4zM4 19h5v4H4z" fill="#3d8cbc" stroke="#1d5d85" strokeWidth=".5" />
            <path d="M11 7h9M11 14h9M11 21h9" stroke="#222" />
          </Ico>
        </QuickSlot>
        <QuickSlot $ml={12}>
          <Ico w={28} h={28} v="0 0 28 28">
            <path d={gearPath(14, 14, 10, 13.2, 9)} fill="#f4f4f4" stroke="#555" />
            <circle cx="14" cy="14" r="5" fill="#f4f4f4" stroke="#555" />
          </Ico>
        </QuickSlot>
        <Caret $ml={7} />
        <DocTitle>002.SLDPRT</DocTitle>
        <SearchBox>
          <Ico w={18} h={18} v="0 0 18 18">
            <rect width="18" height="18" rx="1" fill="#111" />
            <path d="M4 4l5 5-5 5" fill="none" stroke="#fff" strokeWidth="1.6" />
            <path d="M10 14h5" stroke="#fff" />
          </Ico>
          <SearchText>搜索命令</SearchText>
          <Ico w={22} h={24} v="0 0 22 24">
            <circle cx="13" cy="9" r="7.5" fill="#f7fbff" stroke="#3a80b0" strokeWidth="1.5" />
            <path d="M8 15l-6 7" stroke="#3a80b0" strokeWidth="3" />
          </Ico>
          <Caret $ml={8} />
        </SearchBox>
        <WindowBtns>
          <Ico w={20} h={31} v="0 0 20 31">
            <circle cx="10" cy="8" r="6" fill="#e6e6e6" stroke="#aaa" />
            <path d="M1 30c-1-9 3-16 9-16s10 7 9 16z" fill="#dcdcdc" stroke="#aaa" />
          </Ico>
          <Help>?</Help>
          <Caret $ml={13} $c="#555" />
          <QuickSlot $ml={16}>
            <Ico w={16} h={30} v="0 0 16 30">
              <rect y="20" width="16" height="3" fill="#555" />
            </Ico>
          </QuickSlot>
          <QuickSlot $ml={20}>
            <Ico w={20} h={18} v="0 0 20 18">
              <path d="M5 4V1h14v10h-4" fill="none" stroke="#444" strokeWidth="1.4" />
              <rect x="1" y="5" width="14" height="12" fill="none" stroke="#444" strokeWidth="1.4" />
              <path d="M1 7h14" stroke="#444" strokeWidth="2" />
            </Ico>
          </QuickSlot>
          <QuickSlot $ml={21}>
            <Ico w={16} h={16} v="0 0 16 16">
              <path d="M1 1l14 14M15 1L1 15" stroke="#333" strokeWidth="1.8" />
            </Ico>
          </QuickSlot>
        </WindowBtns>
      </TitleBar>

      <Ribbon>
        {ribbonGroups.map((group, gi) => (
          <React.Fragment key={gi}>
            {group.map(([icon, label, w]) => (
              <RibbonItem key={label} $w={w}>
                <Ico w={24}>{ribbonIcons[icon]}</Ico>
                <RibbonLabel>{label}</RibbonLabel>
              </RibbonItem>
            ))}
            {gi < ribbonGroups.length - 1 && <RibbonSep />}
          </React.Fragment>
        ))}
      </Ribbon>

      <CommandTabs>
        {commandTabs.map(([t, w, fs], i) => (
          <CommandTab key={t} $w={w} $fs={fs} $active={i === commandTabs.length - 1}>{t}</CommandTab>
        ))}
        <DocControls>
          <Ico w={19} h={22} v="0 0 19 22"><path d="M1 1h17v20H1zM6 1v20" fill="none" stroke="#24b12c" strokeWidth="1.3" /><path d="M4 8l-3 3 3 3z" fill="#24a02c" /></Ico>
          <Ico w={19} h={22} v="0 0 19 22"><path d="M1 1h17v20H1zM13 1v20" fill="none" stroke="#24b12c" strokeWidth="1.3" /><path d="M15 8l3 3-3 3z" fill="#24a02c" /></Ico>
          <Ico w={16} h={22} v="0 0 16 22"><rect y="18" width="16" height="3" fill="#24a02c" /></Ico>
          <Ico w={20} h={22} v="0 0 20 22"><path d="M5 6V3h14v11h-3M1 7h15v13H1zM1 9h15" fill="none" stroke="#24b12c" strokeWidth="1.3" /></Ico>
          <Ico w={17} h={22} v="0 0 17 22"><path d="M1 4l15 15M16 4L1 19" stroke="#24b12c" strokeWidth="1.6" /></Ico>
        </DocControls>
      </CommandTabs>

      <Main>
        <FeaturePanel>
          <GripRow><GripDot /></GripRow>
          <PanelTabs>
            <PanelTab $active><PartIcon s={30} /></PanelTab>
            <PanelTab>
              <Ico w={28} h={26} v="0 0 28 26">
                <rect x="1" y="1" width="26" height="24" rx="1" fill="#eef2f6" stroke="#1f5f88" strokeWidth="1.3" />
                <rect x="1" y="1" width="26" height="4" fill="#2f7fa8" />
                <path d="M4 8h6v4H4zM4 14h6v4H4zM4 20h6v3H4z" fill="#3d92c4" />
                <path d="M12 10h12M12 16h12M12 21h12" stroke="#333" />
              </Ico>
            </PanelTab>
            <PanelTab>
              <Ico w={24} h={28} v="0 0 24 28">
                <rect x="9" y="1" width="13" height="11" fill="#eee" stroke="#333" />
                <rect x="11" y="16" width="12" height="11" fill="#eee" stroke="#333" />
                <path d="M2 1v26h9M2 6h7M2 21h9M5 1v26" fill="none" stroke="#333" />
              </Ico>
            </PanelTab>
            <PanelTab>
              <Ico w={28} h={28} v="0 0 28 28">
                <circle cx="14" cy="14" r="9" fill="none" stroke="#222" strokeWidth="2" />
                <path d="M14 1v26M1 14h26" stroke="#222" strokeWidth="2" />
              </Ico>
            </PanelTab>
            <PanelTab>
              <Ico w={27} h={27} v="0 0 27 27">
                <circle cx="13.5" cy="13.5" r="13" fill="#2a6ebb" />
                <path d="M13.5.5A13 13 0 0 1 26.5 13.5L20 16c-3-4-5-8-6.500-15.500z" fill="#111" />
                <path d="M1 17c5 1 9 0 12-1l1 10.500C8 26.500 3 23 1 17z" fill="#3fa83f" />
                <path d="M14 16.500c4-1 8-2 12-1-1 5-5 10-12 11z" fill="#e2b52c" />
                <path d="M13 1a13 13 0 0 0-7 3l7 1z" fill="#b03030" />
              </Ico>
            </PanelTab>
          </PanelTabs>
          <FilterBox>
            <Ico w={18} h={18} v="0 0 18 18">
              <path d="M1 2h16l-6 7v8l-4-2V9z" fill="#dff1f6" stroke="#444" />
              <path d="M1 2h16l-1 2H2z" fill="#2f8fb0" />
            </Ico>
          </FilterBox>
          <FeatureTree>
            <RootRow>
              <PartIcon s={18} />
              <span>002  (默认&lt; &lt;默认 &gt;_显示状态 1 &gt;)</span>
            </RootRow>
            {featureRows.map(([hasArrow, icon, text]) => (
              <FeatureRow key={text}>
                <ArrowCell>{hasArrow ? <TreeArrow /> : null}</ArrowCell>
                <IconCell>{icon}</IconCell>
                {text}
              </FeatureRow>
            ))}
            <FeatureRow $muted>
              <ArrowCell><TreeArrow /></ArrowCell>
              <IconCell>
                <Folder muted><path d="M4 11l6-3 5 3-6 4z" fill="#ddd" stroke="#b5b5b5" /></Folder>
              </IconCell>
              平板型式
            </FeatureRow>
          </FeatureTree>
          <RollbackBar />
          <PanelFooter />
          <FlyoutGrip><GripDot /></FlyoutGrip>
        </FeaturePanel>

        <Canvas>
          <HeadsUp>
            {hudIcons.map((h, i) => (
              <React.Fragment key={i}>
                <HudSlot $on={h.on}>
                  <Ico w={28} h={28} v="0 0 28 28">{h.el}</Ico>
                </HudSlot>
                {h.caret && <HudCaret $w={h.caret}><Caret $c="#2ea233" /></HudCaret>}
              </React.Fragment>
            ))}
          </HeadsUp>

          <Triad>
            <Svg width="56" height="64" viewBox="0 0 56 64">
              <text x="3" y="17" fontSize="12" fill="#e01818" fontFamily="Liberation Serif">X</text>
              <path d="M46 13H20" stroke="#c83030" strokeWidth="6" />
              <path d="M46 13H20" stroke="#f08888" strokeWidth="2.4" />
              <path d="M12 13l11-6v12z" fill="#c01c1c" />
              <path d="M46 13v28" stroke="#1d6a24" strokeWidth="6" />
              <path d="M46 13v28" stroke="#88cc88" strokeWidth="2.4" />
              <path d="M40 38h12l-6 12z" fill="#1a5f20" />
              <circle cx="46" cy="13" r="6" fill="#16169a" />
              <text x="42.500" y="62" fontSize="12" fill="#178a20" fontFamily="Liberation Serif">Y</text>
            </Svg>
          </Triad>

          <Dialog>
            <DialogHead>
              <span>文档属性(D) - 基准点</span>
              <Ico w={13} h={13} v="0 0 13 13"><path d="M1 1l11 11M12 1L1 12" stroke="#222" strokeWidth="1.2" /></Ico>
            </DialogHead>
            <DialogTop>
              <OptionTab>系统选项<small>(S)</small></OptionTab>
              <OptionTab $active>文档属性<small>(D)</small></OptionTab>
              <OptionSearch>
                <Ico w={16} h={16} v="0 0 16 16">
                  <path d={gearPath(8, 8, 5.6, 7.6, 8)} fill="#f7f7f7" stroke="#555" />
                  <circle cx="8" cy="8" r="2.6" fill="none" stroke="#555" />
                </Ico>
                <span>搜索选项</span>
                <Ico w={24} h={24}>
                  <circle cx="10" cy="10" r="7.5" fill="none" stroke="#8a8a8a" strokeWidth="2" />
                  <path d="M15 16l7 7" stroke="#8a8a8a" strokeWidth="3" />
                </Ico>
              </OptionSearch>
            </DialogTop>
            <PropsPanel>
              <OptionTree>
                {optionRows.map((r) => (
                  <OptionRow key={r.t} $level={r.l} $small={r.small}>
                    {r.v1 && <Guide $x={11} />}
                    {r.v1end && <Guide $x={11} $bottom={10} />}
                    {r.v2 && <Guide $x={30} $bottom={r.v2end ? 10 : 0} />}
                    {r.l === 2 && <Stub $x={31} $w={8} />}
                    {r.stub && <Stub $x={12} $w={9} />}
                    {r.exp && <Stub $x={17} $w={4} />}
                    {r.exp && <Expander $open={r.exp === "open"} />}
                    {r.sel ? <Sel>{r.t}</Sel> : r.t}
                  </OptionRow>
                ))}
              </OptionTree>
              <ScrollFrame>
                <ScrollView>
                  <Group $wide $h={51} $pt={7}>
                    <Legend>总绘图标准</Legend>
                    <SmallText>GB-</SmallText>
                  </Group>
                  <Group $mt={8} $h={62} $pt={6}>
                    <Legend>基本基准标准</Legend>
                    <Combo $w={366} $h={25} $pl={4}>GB<Chevron c="#555" /></Combo>
                  </Group>
                  <Preview>
                    <Svg width="203" height="236" viewBox="0 0 203 236">
                      <circle cx="181" cy="63" r="29" fill="none" stroke="#000" />
                      <path d="M175 84l5-30 5 30M177 74h7" fill="none" stroke="#000" />
                      <path d="M181 92v96" stroke="#000" />
                      <rect x="151" y="187" width="52" height="9" fill="#000" />
                    </Svg>
                  </Preview>
                  <Group $mt={6} $h={79} $pt={10}>
                    <Legend>引线样式</Legend>
                    <StyleFields />
                  </Group>
                  <Group $mt={6} $h={79} $pt={10}>
                    <Legend>框架样式</Legend>
                    <StyleFields />
                  </Group>
                  <Group $mt={6} $h={65} $pt={7}>
                    <Legend>文本</Legend>
                    <FontRow>
                      <FontButton>字体<small>(F)...</small></FontButton>
                      汉仪长仿宋体
                    </FontRow>
                  </Group>
                  <Group $mt={7} $h={97} $pt={4}>
                    <Legend>基准特征</Legend>
                    <FieldRow>
                      <FieldLabel>显示类型</FieldLabel>
                      <Combo $w={137} $h={25} $fs={15.8}>依照标准<Chevron c="#555" /></Combo>
                    </FieldRow>
                    <FieldRow $mt={13}>
                      <FieldLabel $mt={-3}>下一标号</FieldLabel>
                      <TextInput>A</TextInput>
                    </FieldRow>
                  </Group>
                  <Group $mt={7} $h={70} $pt={8}>
                    <Legend>定位样式</Legend>
                    <ToggleRow>
                      <Toggle $on>
                        <Ico w={16} h={16} v="0 0 16 16"><path d="M2 9l4 5 8-13" fill="none" stroke="#222" strokeWidth="1.5" /></Ico>
                      </Toggle>
                      <Toggle>
                        <Ico w={12} h={14} v="0 0 12 14"><path d="M7 1v10" stroke="#222" /><path d="M2 11h6v2H2z" fill="#222" /></Ico>
                      </Toggle>
                      <Toggle>
                        <Ico w={18} h={14} v="0 0 18 14"><path d="M2 2l6 8" stroke="#222" strokeWidth="1.4" /><path d="M6 9h10v3H6z" fill="#222" /></Ico>
                      </Toggle>
                    </ToggleRow>
                  </Group>
                </ScrollView>
                <VScroll>
                  <Chevron up c="#444" />
                  <VThumb />
                  <VDown><Chevron c="#444" /></VDown>
                </VScroll>
                <HScroll>
                  <Chevron left c="#444" />
                  <HThumb />
                  <HRight><Chevron right c="#444" /></HRight>
                </HScroll>
              </ScrollFrame>
            </PropsPanel>
            <DialogFooter>
              <DlgButton $primary>确定</DlgButton>
              <DlgButton>取消</DlgButton>
              <DlgButton>帮助</DlgButton>
            </DialogFooter>
            <ResizeGrip>
              <Ico w={14} h={14} v="0 0 14 14"><path d="M13 2L2 13M13 6l-7 7M13 10l-3 3" stroke="#9a9a9a" /></Ico>
            </ResizeGrip>
          </Dialog>
        </Canvas>
      </Main>

      <BottomTabs>
        <Stripe />
        <NavButtons>
          {["M9 2v8l-5-4zM2 2v8", "M9 2v8l-6-4z", "M3 2v8l6-4z", "M3 2v8l5-4zM10 2v8"].map((d) => (
            <NavButton key={d}>
              <Ico w={12} h={12} v="0 0 12 12"><path d={d} fill="#82849a" stroke="#82849a" /></Ico>
            </NavButton>
          ))}
        </NavButtons>
        <SheetTab $active $w={61}>模型</SheetTab>
        <SheetTab $w={78}>3D 视图</SheetTab>
        <SheetTab $join $w={108}>运动算例 1</SheetTab>
      </BottomTabs>
      <StatusBar>
        <StatusCell $w={1610} $j="flex-start">SOLIDWORKS Premium 2018 SP5.0</StatusCell>
        <StatusCell $line $w={8} />
        <StatusCell $line $w={89}>在编辑 零件</StatusCell>
        <StatusCell $line $w={16} />
        <StatusCell $line $w={84} $j="flex-end">MMGS</StatusCell>
        <Caret $c="#444" $up $ml={19} />
        <StatusCell $ml={63} $w={22}>
          <Ico w={18} h={16} v="0 0 18 16"><path d="M1 5l9-4 7 5v4l-8 5-8-5z" fill="#eee" stroke="#444" /><path d="M1 5l8 5 8-4M9 10v5" fill="none" stroke="#444" /></Ico>
        </StatusCell>
      </StatusBar>
    </Page>
  );
}
